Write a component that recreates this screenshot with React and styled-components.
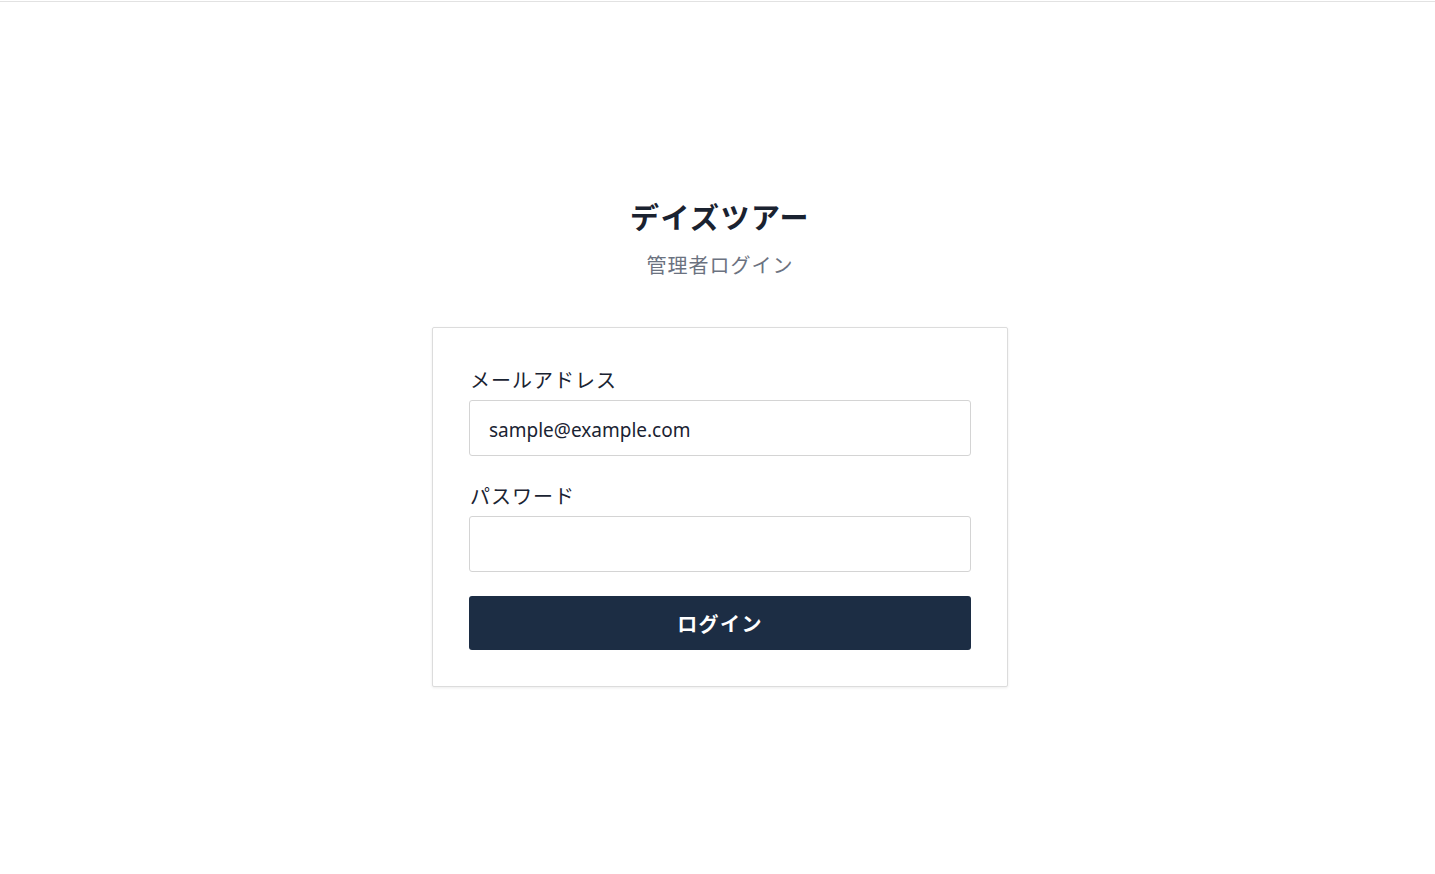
import React from "react";
import styled, { createGlobalStyle } from "styled-components";

const Global = createGlobalStyle`
  * { box-sizing: border-box; }
  html, body { margin: 0; padding: 0; background: #fff; }
  body {
    font-family: "Noto Sans CJK JP", "Noto Sans", sans-serif;
    color: #1a2332;
    border-top: 1px solid #e2e2e2;
    margin-top: 1px;
  }
`;

const Page = styled.main`
  min-height: 872px;
  display: flex;
  flex-direction: column;
  align-items: center;
  padding-top: 194px;
  padding-left: 5px;
`;

const Title = styled.h1`
  margin: 0;
  font-size: 29px;
  font-weight: 700;
  line-height: 40px;
  letter-spacing: 0.05em;
  color: #1a2230;
`;

const Subtitle = styled.p`
  margin: 14px 0 0;
  font-size: 20px;
  font-weight: 400;
  line-height: 30px;
  letter-spacing: 0.05em;
  color: #6b7280;
`;

const Card = styled.form`
  margin-top: 47px;
  width: 576px;
  background: #fff;
  border: 1px solid #dcdcdc;
  border-radius: 2px;
  box-shadow: 0 1px 3px rgba(0, 0, 0, 0.08);
  padding: 36px;
  display: flex;
  flex-direction: column;
`;

const Field = styled.div`
  display: flex;
  flex-direction: column;
  gap: 6px;
  margin-bottom: 24px;
`;

const Label = styled.label`
  font-size: 20px;
  line-height: 28px;
  padding: 2px 0 0 1px;
  letter-spacing: 0.05em;
  color: #1a2332;
`;

const Input = styled.input`
  height: 56px;
  width: 100%;
  border: 1px solid #d4d4d4;
  border-radius: 3px;
  padding: 3px 19px 0;
  font-family: "Noto Sans", "Noto Sans CJK JP", sans-serif;
  font-size: 19px;
  letter-spacing: 0;
  color: #1a2332;
  background: #fff;
  outline: none;
`;

const Button = styled.button`
  height: 54px;
  width: 100%;
  border: none;
  border-radius: 3px;
  background: #1c2d44;
  color: #fff;
  font-family: "Noto Sans CJK JP", "Noto Sans", sans-serif;
  font-size: 20px;
  font-weight: 700;
  letter-spacing: 0.07em;
  cursor: pointer;
`;

export default function App() {
  return (
    <>
      <Global />
      <Page>
        <Title>デイズツアー</Title>
        <Subtitle>管理者ログイン</Subtitle>
        <Card onSubmit={(e) => e.preventDefault()}>
          <Field>
            <Label htmlFor="email">メールアドレス</Label>
            <Input id="email" type="email" defaultValue="sample@example.com" />
          </Field>
          <Field>
            <Label htmlFor="password">パスワード</Label>
            <Input id="password" type="password" />
          </Field>
          <Button type="submit">ログイン</Button>
        </Card>
      </Page>
    </>
  );
}
